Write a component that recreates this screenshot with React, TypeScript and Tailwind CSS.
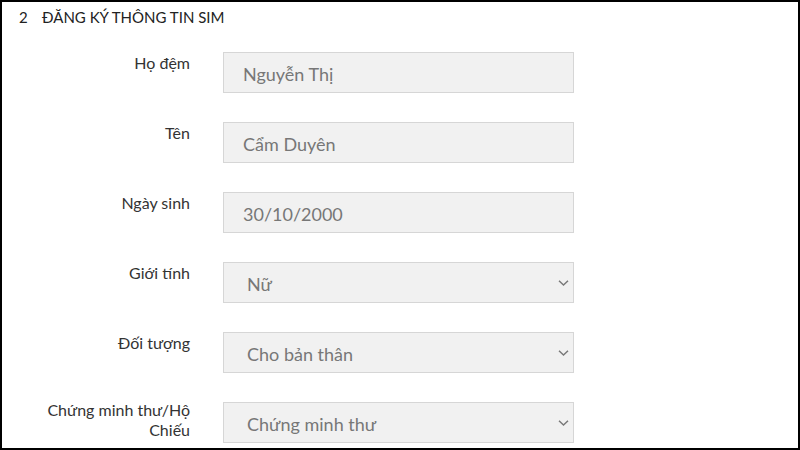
import React from "react";

function Chevron() {
  return (
    <svg
      className="absolute right-[4px] top-1/2 -translate-y-1/2"
      width="11"
      height="7"
      viewBox="0 0 11 7"
      fill="none"
    >
      <path d="M1 1.2L5.5 5.5L10 1.2" stroke="#7a7a7a" strokeWidth="1.5" />
    </svg>
  );
}

type Row = { label: string; value: string; select?: boolean; twoLine?: boolean };

const rows: Row[] = [
  { label: "Họ đệm", value: "Nguyễn Thị" },
  { label: "Tên", value: "Cẩm Duyên" },
  { label: "Ngày sinh", value: "30/10/2000" },
  { label: "Giới tính", value: "Nữ", select: true },
  { label: "Đối tượng", value: "Cho bản thân", select: true },
  { label: "Chứng minh thư/Hộ Chiếu", value: "Chứng minh thư", select: true, twoLine: true },
];

export default function App() {
  return (
    <div
      className="w-[800px] h-[450px] border-2 border-black bg-white overflow-hidden"
      style={{ fontFamily: "Lato, 'Noto Sans', sans-serif" }}
    >
      <div className="h-[30px] flex items-center pl-[17px] text-[15px] text-[#222] leading-none">
        <span className="w-[23px]">2</span>
        <span>ĐĂNG KÝ THÔNG TIN SIM</span>
      </div>
      <div className="mt-[20px] pl-[38px] flex flex-col gap-[29px]">
        {rows.map((r) => (
          <div
            key={r.label}
            className="grid grid-cols-[150px_351px] gap-x-[33px] h-[41px]"
          >
            <div
              className={
                "text-right text-[16px] leading-[20px] text-[#333] " +
                (r.twoLine ? "-mt-[2px]" : "pt-[1px]")
              }
            >
              {r.label}
            </div>
            <div className="relative h-[41px] border border-[#d6d6d6] bg-[#f1f1f1] flex items-center pl-[19px] pt-[4px] text-[18px] text-[#777]">
              <span className={r.select ? "pl-[4px]" : ""}>{r.value}</span>
              {r.select && <Chevron />}
            </div>
          </div>
        ))}
      </div>
    </div>
  );
}
